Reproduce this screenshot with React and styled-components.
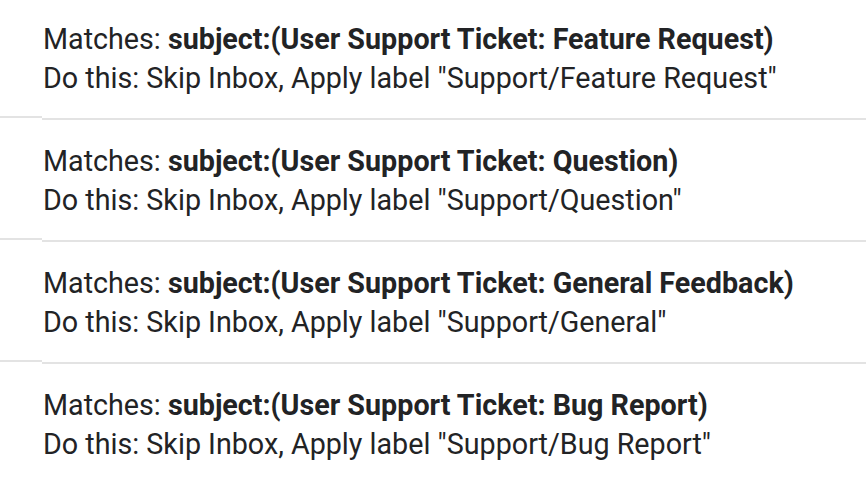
import styled, { createGlobalStyle } from "styled-components";

const GlobalStyle = createGlobalStyle`
  html, body {
    margin: 0;
    padding: 0;
    background: #ffffff;
  }
  body {
    font-family: Roboto, "Liberation Sans", Arial, sans-serif;
  }
`;

// list is scrolled by 2px, so the first row is cut at the top
const List = styled.main`
  width: 866px;
  margin-top: -2px;
  display: flex;
  flex-direction: column;
`;

const FilterRow = styled.section`
  height: 120px;
  display: flex;
  flex-direction: column;
  justify-content: center;
  padding: 1px 0 0 43px;
  box-sizing: border-box;
  color: #222325;
  font-size: 28.7px;
  line-height: 39px;
  white-space: nowrap;
`;

const Line = styled.div`
  margin: 0;
`;

const Criteria = styled.b`
  font-weight: 700;
`;

const Separator = styled.div`
  height: 2px;
  display: flex;
`;

const SepStub = styled.span`
  width: 42px;
  height: 2px;
  background: #e3e3e3;
  transform: translateY(-2px);
`;

const SepLine = styled.span`
  flex: 1;
  height: 2px;
  background: #e3e3e3;
`;

const filters = [
  {
    subject: "subject:(User Support Ticket: Feature Request)",
    label: "Support/Feature Request",
  },
  {
    subject: "subject:(User Support Ticket: Question)",
    label: "Support/Question",
  },
  {
    subject: "subject:(User Support Ticket: General Feedback)",
    label: "Support/General",
  },
  {
    subject: "subject:(User Support Ticket: Bug Report)",
    label: "Support/Bug Report",
  },
];

const App = () => {
  return (
    <>
      <GlobalStyle />
      <List>
        {filters.map((f, i) => (
          <div key={f.label}>
            <FilterRow>
              <Line>
                Matches: <Criteria>{f.subject}</Criteria>
              </Line>
              <Line>Do this: Skip Inbox, Apply label "{f.label}"</Line>
            </FilterRow>
            {i < filters.length - 1 && (
              <Separator>
                <SepStub />
                <SepLine />
              </Separator>
            )}
          </div>
        ))}
      </List>
    </>
  );
};

export default App;
